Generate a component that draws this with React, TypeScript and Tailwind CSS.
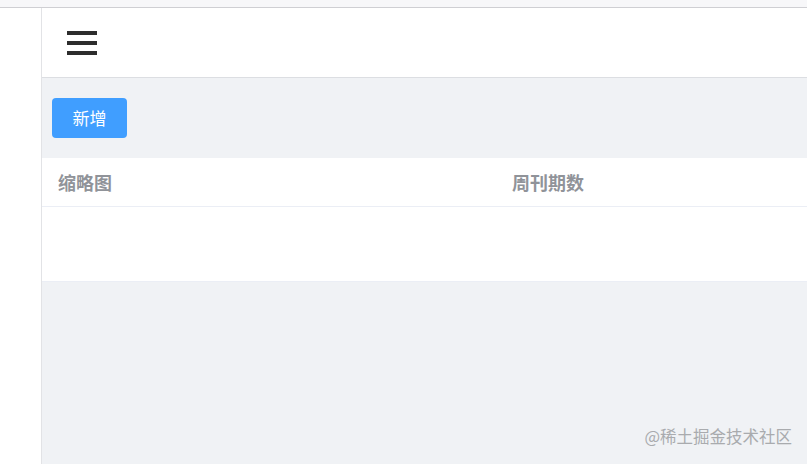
const cjk = { fontFamily: '"Noto Sans CJK SC", "Noto Sans", sans-serif' };

function Hamburger() {
  return (
    <div className="flex w-[30px] flex-col gap-[6px]">
      <span className="block h-[4px] w-full bg-[#2d2d2d]" />
      <span className="block h-[4px] w-full bg-[#2d2d2d]" />
      <span className="block h-[4px] w-full bg-[#2d2d2d]" />
    </div>
  );
}

export default function App() {
  return (
    <div className="relative flex h-[464px] w-[807px] flex-col overflow-hidden bg-white" style={cjk}>
      <div className="h-[8px] shrink-0 border-b border-[#cfcfd3] bg-[#f7f7f9]" />
      <div className="flex min-h-0 flex-1">
        <aside className="w-[42px] shrink-0 border-r border-[#e2e3e6] bg-white" />
        <main className="flex min-w-0 flex-1 flex-col bg-[#f0f2f5]">
          <header className="flex h-[70px] shrink-0 items-center border-b border-[#dcdee2] bg-white pl-[25px]">
            <Hamburger />
          </header>
          <div className="px-[10px] py-[20px]">
            <button className="flex h-[40px] w-[75px] items-center justify-center rounded-[4px] bg-[#409eff] text-[17px] text-white">
              新增
            </button>
          </div>
          <div className="bg-white">
            <div className="flex h-[49px] items-center border-b border-[#ebeef5] text-[18px] font-bold text-[#909399]">
              <div className="w-[454px] pl-[16px]">缩略图</div>
              <div className="pl-[16px]">周刊期数</div>
            </div>
            <div className="h-[75px] border-b border-[#ebeef5]" />
          </div>
        </main>
      </div>
      <div className="absolute right-[15px] bottom-[15px] text-[16.5px] text-[#a9abae]">@稀土掘金技术社区</div>
    </div>
  );
}
